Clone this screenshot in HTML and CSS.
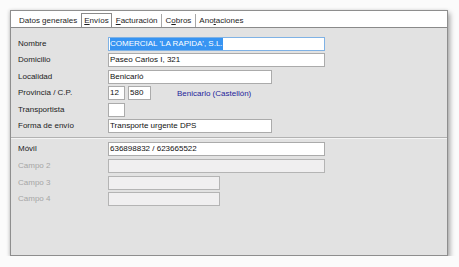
FILE: index.html
```html
<!DOCTYPE html>
<html lang="es">
<head>
  <meta charset="UTF-8">
  <title>Envíos</title>
  <link rel="stylesheet" href="styles.css">
</head>
<body>
  <div class="window">
    <div class="tabs">
      <span class="tab">Datos generales</span>
      <span class="tab active"><u>E</u>nvíos</span>
      <span class="tab"><u>F</u>acturación</span>
      <span class="tab sep">C<u>o</u>bros</span>
      <span class="tab sep">Ano<u>t</u>aciones</span>
    </div>

    <div class="panel">
      <div class="rows">
        <label>Nombre</label>
        <div class="field w-lg focus"><span class="sel">COMERCIAL 'LA RAPIDA', S.L.</span></div>

        <label>Domicilio</label>
        <div class="field w-lg">Paseo Carlos I, 321</div>

        <label>Localidad</label>
        <div class="field w-md">Benicarló</div>

        <label>Provincia / C.P.</label>
        <div class="inline">
          <div class="field w-xs">12</div>
          <div class="field w-sm">580</div>
          <span class="info">Benicarlo (Castellón)</span>
        </div>

        <label>Transportista</label>
        <div class="field w-xs"></div>

        <label>Forma de envío</label>
        <div class="field w-md">Transporte urgente DPS</div>
      </div>

      <div class="divider"></div>

      <div class="rows">
        <label>Móvil</label>
        <div class="field w-lg">636898832 / 623665522</div>

        <label class="off">Campo 2</label>
        <div class="field w-lg disabled"></div>

        <label class="off">Campo 3</label>
        <div class="field w-ms disabled"></div>

        <label class="off">Campo 4</label>
        <div class="field w-ms disabled"></div>
      </div>
    </div>
  </div>
</body>
</html>
```

FILE: styles.css
```css
body {
  margin: 0;
  background-color: #fbfbfb;
  font-family: "Liberation Sans", Arial, sans-serif;
  font-size: 8px;
  color: #1c1c1c;
}

.window {
  margin: 10px 0 0 10px;
  width: 436px;
  height: 244px;
  border: 1px solid #8e8e8e;
  background-color: #e2e2e2;
  box-shadow: 2px 3px 5px rgba(0, 0, 0, 0.35), -1px 0 3px rgba(0, 0, 0, 0.12);
  display: flex;
  flex-direction: column;
}

/* tab strip */
.tabs {
  height: 14px;
  padding: 2px 0 0 4.5px;
  background-color: #fff;
  border-bottom: 1px solid #8a8a8a;
  display: flex;
  align-items: flex-end;
}

.tab {
  height: 13px;
  line-height: 13px;
  padding: 0 3.5px;
  white-space: nowrap;
}

.tab.active {
  height: 14px;
  padding: 0 2.5px;
  border: 1px solid #8a8a8a;
  border-bottom: none;
  box-sizing: border-box;
}

.tab.sep {
  border-left: 1px solid #a8a8a8;
}

/* form */
.panel {
  flex: 1;
  padding: 8.5px 0 0 7px;
}

.rows {
  display: grid;
  grid-template-columns: 90px auto;
  grid-auto-rows: 14px;
  row-gap: 2.6px;
  justify-items: start;
  align-items: center;
}

.rows label {
  line-height: 14px;
}

.rows label.off {
  color: #a6a6a6;
}

.field {
  height: 14px;
  box-sizing: border-box;
  border: 1px solid #ababab;
  background-color: #fff;
  padding: 0 1px;
  line-height: 12px;
  white-space: nowrap;
  overflow: hidden;
  color: #111;
}

.field.focus {
  border-color: #7fb2e5;
}

.field.disabled {
  background-color: #f0eff0;
  border-color: #b4b4b4;
}

.sel {
  display: inline-block;
  background-color: #3794f2;
  color: #fff;
  line-height: 12px;
}

.w-lg { width: 217px; }
.w-md { width: 164px; }
.w-ms { width: 112px; }
.w-sm { width: 23px; }
.w-xs { width: 17px; }

.inline {
  display: flex;
  align-items: center;
  gap: 3px;
}

.info {
  margin-left: 23px;
  color: #25259a;
}

.divider {
  margin: 4px 0 3px -7px;
  height: 0;
  border-top: 1px solid #b2b2b2;
  border-bottom: 1px solid #f4f4f4;
}
```
